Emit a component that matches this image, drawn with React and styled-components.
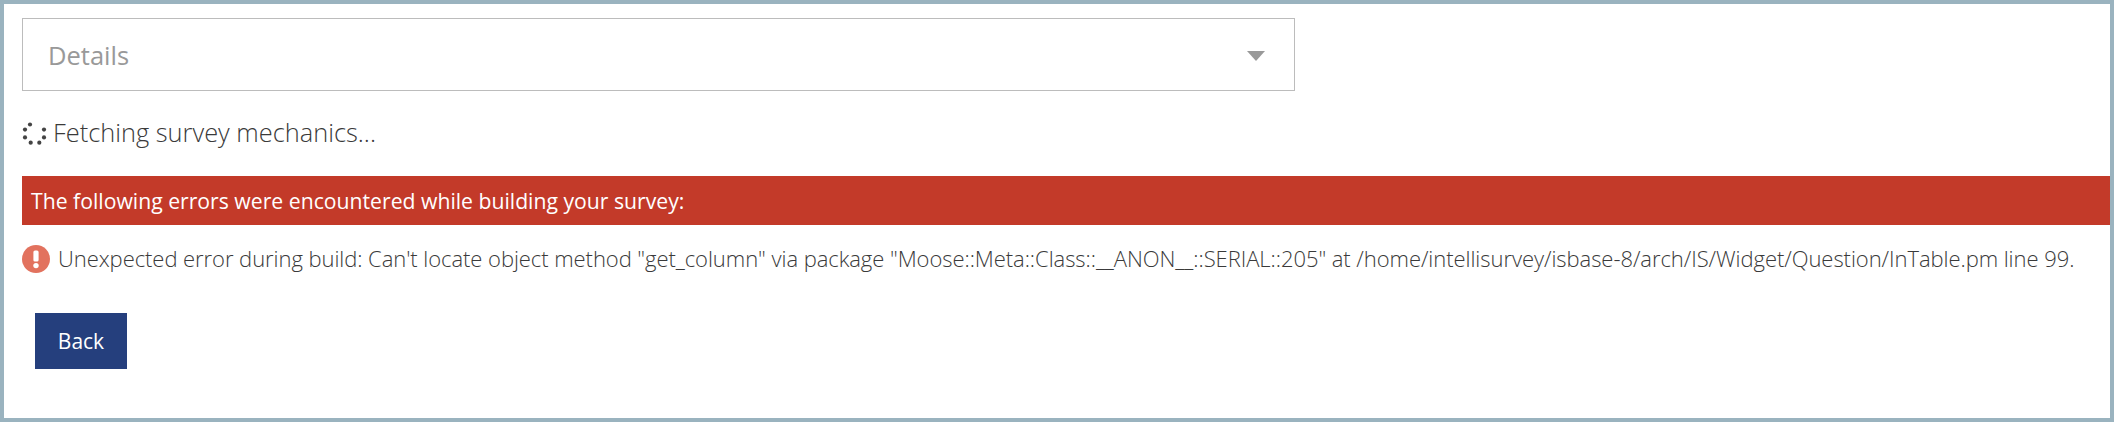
import styled, { createGlobalStyle } from 'styled-components';

const GlobalStyle = createGlobalStyle`
  html, body {
    margin: 0;
    padding: 0;
    background: #fff;
  }
  * {
    box-sizing: border-box;
  }
`;

const App = () => (
  <>
    <GlobalStyle />
    <Frame>
      <Details>
        <DetailsLabel>Details</DetailsLabel>
        <Caret />
      </Details>

      <Fetching>
        <Spinner viewBox="0 0 25 25">
          <circle cx="8" cy="3.5" r="2.1" />
          <circle cx="3" cy="8.6" r="2.1" />
          <circle cx="3" cy="16.4" r="2.1" />
          <circle cx="8.7" cy="21.7" r="2.1" />
          <circle cx="17.3" cy="21.7" r="2.1" />
          <circle cx="22" cy="16.4" r="2.1" />
          <circle cx="22" cy="8.6" r="2.1" />
        </Spinner>
        <FetchingText>Fetching survey mechanics...</FetchingText>
      </Fetching>

      <ErrorBanner>The following errors were encountered while building your survey:</ErrorBanner>

      <ErrorRow>
        <ErrorIcon viewBox="0 0 28 28">
          <circle cx="14" cy="14" r="14" fill="#e2725e" />
          <rect x="11.4" y="5.5" width="5.2" height="11" rx="1.6" fill="#fff" />
          <circle cx="14" cy="20.6" r="2.7" fill="#fff" />
        </ErrorIcon>
        <ErrorText>
          Unexpected error during build: Can't locate object method "get_column" via package "Moose::Meta::Class::__ANON__::SERIAL::205" at /home/intellisurvey/isbase-8/arch/IS/Widget/Question/InTable.pm line 99.
        </ErrorText>
      </ErrorRow>

      <BackButton>Back</BackButton>
    </Frame>
  </>
);

const Frame = styled.div`
  width: 2114px;
  height: 422px;
  border: 4px solid #9ab3bf;
  padding: 14px 0 0 18px;
  background: #fff;
  font-family: 'Open Sans', 'Liberation Sans', sans-serif;
  overflow: hidden;
`;

const Details = styled.div`
  width: 1273px;
  height: 73px;
  border: 1.5px solid #bcbcbc;
  padding: 0 29px 0 25px;
  display: flex;
  align-items: center;
  justify-content: space-between;
`;

const DetailsLabel = styled.span`
  font-size: 25.5px;
  font-weight: 400;
  color: #999;
`;

const Caret = styled.span`
  width: 0;
  height: 0;
  margin-top: 3px;
  border-left: 9px solid transparent;
  border-right: 9px solid transparent;
  border-top: 10px solid #999;
`;

const Fetching = styled.div`
  margin-top: 26px;
  height: 32px;
  display: flex;
  align-items: center;
  gap: 6px;
`;

const Spinner = styled.svg`
  width: 25px;
  height: 25px;
  fill: #444;
  flex-shrink: 0;
`;

const FetchingText = styled.span`
  font-size: 25.4px;
  font-weight: 300;
  color: #3a3a3a;
  white-space: nowrap;
  margin-bottom: 2px;
`;

const ErrorBanner = styled.div`
  margin-top: 27px;
  width: 2088px;
  height: 49px;
  padding-left: 9px;
  display: flex;
  align-items: center;
  background: #c33a29;
  color: #fff;
  font-size: 21.2px;
  font-weight: 400;
  white-space: nowrap;
`;

const ErrorRow = styled.div`
  margin-top: 20px;
  height: 28px;
  display: flex;
  align-items: center;
  gap: 8px;
`;

const ErrorIcon = styled.svg`
  width: 28px;
  height: 28px;
  flex-shrink: 0;
`;

const ErrorText = styled.span`
  font-size: 22px;
  font-weight: 300;
  letter-spacing: -0.06px;
  color: #3a3a3a;
  white-space: nowrap;
  margin-bottom: 2px;
`;

const BackButton = styled.button`
  display: block;
  margin: 40px 0 0 13px;
  width: 92px;
  height: 56px;
  border: none;
  background: #253f7d;
  color: #fff;
  font-family: inherit;
  font-size: 21px;
  cursor: pointer;
`;

export default App;
